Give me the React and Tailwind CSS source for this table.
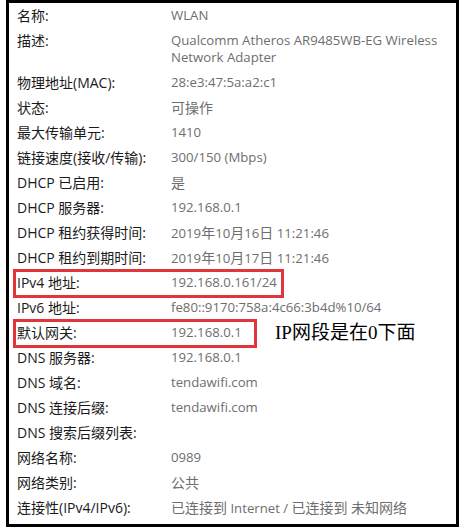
const rows = [
  ["名称:", "WLAN"],
  ["描述:", ["Qualcomm Atheros AR9485WB-EG Wireless", "Network Adapter"]],
  ["物理地址(MAC):", "28:e3:47:5a:a2:c1"],
  ["状态:", "可操作"],
  ["最大传输单元:", "1410"],
  ["链接速度(接收/传输):", "300/150 (Mbps)"],
  ["DHCP 已启用:", "是"],
  ["DHCP 服务器:", "192.168.0.1"],
  ["DHCP 租约获得时间:", "2019年10月16日 11:21:46"],
  ["DHCP 租约到期时间:", "2019年10月17日 11:21:46"],
  ["IPv4 地址:", "192.168.0.161/24"],
  ["IPv6 地址:", "fe80::9170:758a:4c66:3b4d%10/64"],
  ["默认网关:", "192.168.0.1"],
  ["DNS 服务器:", "192.168.0.1"],
  ["DNS 域名:", "tendawifi.com"],
  ["DNS 连接后缀:", "tendawifi.com"],
  ["DNS 搜索后缀列表:", ""],
  ["网络名称:", "0989"],
  ["网络类别:", "公共"],
  ["连接性(IPv4/IPv6):", "已连接到 Internet / 已连接到 未知网络"],
];

// 中文用 14px，西文数字稍小一点，接近 Segoe UI 的宽度
function Value({ text }) {
  const parts = text.split(/([\u4e00-\u9fff]+)/).filter(Boolean);
  return (
    <div className="flex items-baseline h-[17px] whitespace-pre">
      {parts.map((p, i) =>
        /[\u4e00-\u9fff]/.test(p) ? (
          <span key={i} className="text-[14px]">{p}</span>
        ) : (
          <span key={i} className="text-[13.2px]">{p}</span>
        )
      )}
    </div>
  );
}

export default function App() {
  return (
    <div className="w-[464px] h-[530px] bg-white">
      <div
        className="relative ml-[6px] w-[453px] h-[527px] border-[3px] border-black px-[8px] text-[14px] leading-[17px]"
        style={{ fontFamily: '"Open Sans", "Noto Sans CJK SC", sans-serif' }}
      >
        {rows.map(([label, value]) => (
          <div key={label} className="flex py-[4px]">
            <div className="w-[154px] shrink-0 text-[#1a1a1a]">{label}</div>
            <div className="text-[#6e6e6e]">
              {Array.isArray(value) ? (
                value.map((line) => <Value key={line} text={line} />)
              ) : value ? (
                <Value text={value} />
              ) : null}
            </div>
          </div>
        ))}

        {/* 标注框 */}
        <div className="absolute left-[4px] top-[266px] w-[271px] h-[29px] border-[3px] border-[#e0353b]" />
        <div className="absolute left-[4px] top-[316px] w-[244px] h-[29px] border-[3px] border-[#e0353b]" />
        <div
          className="absolute left-[266px] top-[318px] text-[19px] leading-[23px] text-black"
          style={{ fontFamily: '"Liberation Serif", "Noto Sans CJK SC", serif' }}
        >
          IP网段是在0下面
        </div>
      </div>
    </div>
  );
}
